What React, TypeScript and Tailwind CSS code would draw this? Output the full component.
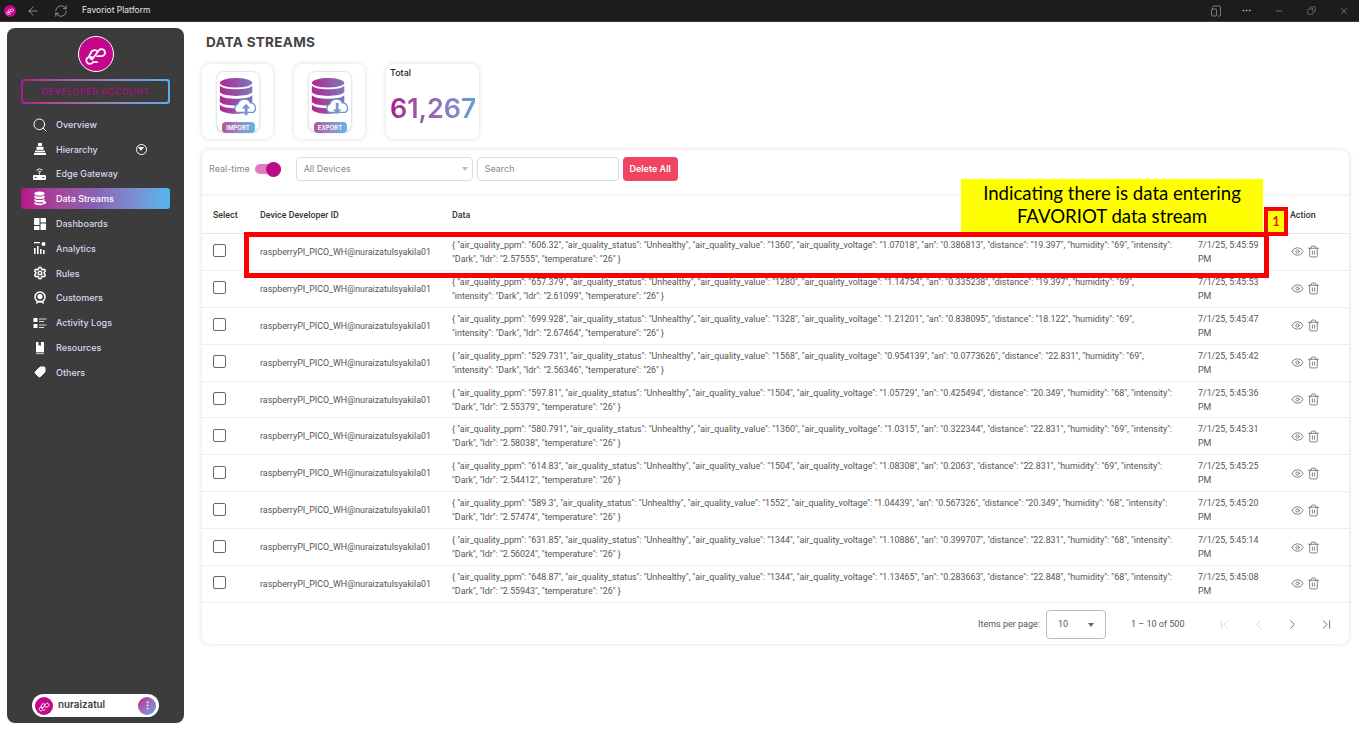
import React from 'react';
import { ArrowLeft, RefreshCw, Search, Settings, Eye, Trash2, ChevronLeft, ChevronRight, ChevronFirst, ChevronLast, Tag, MoreHorizontal, Minus, Copy, X, MoreVertical, TabletSmartphone } from 'lucide-react';

const rows = [
  ['{ "air_quality_ppm": "606.32", "air_quality_status": "Unhealthy", "air_quality_value": "1360", "air_quality_voltage": "1.07018", "an": "0.386813", "distance": "19.397", "humidity": "69", "intensity":', '"Dark", "ldr": "2.57555", "temperature": "26" }', '7/1/25, 5:45:59'],
  ['{ "air_quality_ppm": "657.379", "air_quality_status": "Unhealthy", "air_quality_value": "1280", "air_quality_voltage": "1.14754", "an": "0.335238", "distance": "19.397", "humidity": "69",', '"intensity": "Dark", "ldr": "2.61099", "temperature": "26" }', '7/1/25, 5:45:53'],
  ['{ "air_quality_ppm": "699.928", "air_quality_status": "Unhealthy", "air_quality_value": "1328", "air_quality_voltage": "1.21201", "an": "0.838095", "distance": "18.122", "humidity": "69",', '"intensity": "Dark", "ldr": "2.67464", "temperature": "26" }', '7/1/25, 5:45:47'],
  ['{ "air_quality_ppm": "529.731", "air_quality_status": "Unhealthy", "air_quality_value": "1568", "air_quality_voltage": "0.954139", "an": "0.0773626", "distance": "22.831", "humidity": "69",', '"intensity": "Dark", "ldr": "2.56346", "temperature": "26" }', '7/1/25, 5:45:42'],
  ['{ "air_quality_ppm": "597.81", "air_quality_status": "Unhealthy", "air_quality_value": "1504", "air_quality_voltage": "1.05729", "an": "0.425494", "distance": "20.349", "humidity": "68", "intensity":', '"Dark", "ldr": "2.55379", "temperature": "26" }', '7/1/25, 5:45:36'],
  ['{ "air_quality_ppm": "580.791", "air_quality_status": "Unhealthy", "air_quality_value": "1360", "air_quality_voltage": "1.0315", "an": "0.322344", "distance": "22.831", "humidity": "69", "intensity":', '"Dark", "ldr": "2.58038", "temperature": "26" }', '7/1/25, 5:45:31'],
  ['{ "air_quality_ppm": "614.83", "air_quality_status": "Unhealthy", "air_quality_value": "1504", "air_quality_voltage": "1.08308", "an": "0.2063", "distance": "22.831", "humidity": "69", "intensity":', '"Dark", "ldr": "2.54412", "temperature": "26" }', '7/1/25, 5:45:25'],
  ['{ "air_quality_ppm": "589.3", "air_quality_status": "Unhealthy", "air_quality_value": "1552", "air_quality_voltage": "1.04439", "an": "0.567326", "distance": "20.349", "humidity": "68", "intensity":', '"Dark", "ldr": "2.57474", "temperature": "26" }', '7/1/25, 5:45:20'],
  ['{ "air_quality_ppm": "631.85", "air_quality_status": "Unhealthy", "air_quality_value": "1344", "air_quality_voltage": "1.10886", "an": "0.399707", "distance": "22.831", "humidity": "68", "intensity":', '"Dark", "ldr": "2.56024", "temperature": "26" }', '7/1/25, 5:45:14'],
  ['{ "air_quality_ppm": "648.87", "air_quality_status": "Unhealthy", "air_quality_value": "1344", "air_quality_voltage": "1.13465", "an": "0.283663", "distance": "22.848", "humidity": "68", "intensity":', '"Dark", "ldr": "2.55943", "temperature": "26" }', '7/1/25, 5:45:08'],
];

const LogoGlyph: React.FC<{ size: number }> = ({ size }) => (
  <svg width={size} height={size} viewBox="0 0 32 32" fill="none" stroke="white" strokeWidth="2.2" strokeLinecap="round">
    <path d="M12 22 L20 11 a4.2 4.2 0 1 1 3.5 7 L18 18" />
    <path d="M18 12 a4.5 4.5 0 0 0 -7 1 L8 19 a4.2 4.2 0 1 0 5 6 h5" />
    <circle cx="11" cy="20" r="1.2" fill="white" />
  </svg>
);

const HierarchyIcon = () => (
  <svg width="14" height="14" viewBox="0 0 14 14" fill="white">
    <rect x="5" y="1" width="4" height="3" />
    <rect x="3.5" y="4.8" width="7" height="3" />
    <rect x="2" y="8.6" width="10" height="1.8" />
    <rect x="1" y="11" width="12" height="2" />
  </svg>
);

const GatewayIcon = () => (
  <svg width="15" height="14" viewBox="0 0 15 14" fill="none">
    <path d="M4.5 3.2 a4.5 4.5 0 0 1 6 0 M6 5 a2.4 2.4 0 0 1 3 0" stroke="white" strokeWidth="1" />
    <rect x="7" y="5.6" width="1" height="2" fill="white" />
    <rect x="1" y="8" width="13" height="5" rx="1.2" fill="white" />
    <rect x="2.6" y="10" width="2" height="1" fill="#3c3c3c" />
    <rect x="10.4" y="10" width="2" height="1" fill="#3c3c3c" />
  </svg>
);

const DbIcon = () => (
  <svg width="14" height="15" viewBox="0 0 14 15" fill="white">
    <ellipse cx="6.5" cy="2.6" rx="5" ry="2" />
    <path d="M1.5 4 c1 2 9 2 10 0 v2.4 c-1 2 -9 2 -10 0 z" />
    <path d="M1.5 7.4 c1 2 9 2 10 0 v2.4 c-1 2 -9 2 -10 0 z" />
    <path d="M1.5 10.8 c1 2 7 2 8 1.4 l1 1.2 c-2 1.2 -8 1 -9 -0.6 z" />
    <circle cx="11.5" cy="11.5" r="1.6" />
  </svg>
);

const DashIcon = () => (
  <svg width="14" height="14" viewBox="0 0 14 14" fill="white">
    <rect x="1" y="1" width="5.5" height="7" rx="0.6" />
    <rect x="7.5" y="1" width="5.5" height="4.5" rx="0.6" />
    <rect x="1" y="9" width="5.5" height="4" rx="0.6" />
    <rect x="7.5" y="6.5" width="5.5" height="6.5" rx="0.6" />
  </svg>
);

const AnalyticsIcon = () => (
  <svg width="14" height="14" viewBox="0 0 14 14" fill="white">
    <rect x="1" y="1" width="6" height="1.3" />
    <circle cx="10.5" cy="3" r="2" />
    <rect x="1" y="7" width="1.6" height="6" />
    <rect x="4" y="5" width="1.6" height="8" />
    <rect x="7" y="8" width="1.6" height="5" />
    <rect x="10" y="9" width="1.6" height="4" />
  </svg>
);

const CustomerIcon = () => (
  <svg width="14" height="14" viewBox="0 0 14 14" fill="none" stroke="white" strokeWidth="1.5">
    <circle cx="7" cy="6" r="5" />
    <circle cx="7" cy="5.5" r="1.8" fill="white" />
    <path d="M3.5 12.5 C4.5 9.5 9.5 9.5 10.5 12.5" />
  </svg>
);

const LogsIcon = () => (
  <svg width="14" height="14" viewBox="0 0 14 14" fill="white">
    <rect x="0.5" y="2" width="4" height="4" />
    <rect x="0.5" y="8" width="4" height="4" />
    <rect x="6" y="2.5" width="7.5" height="1" opacity="0.8" />
    <rect x="6" y="5" width="5" height="1" opacity="0.8" />
    <rect x="6" y="8.5" width="7.5" height="1" opacity="0.8" />
    <rect x="6" y="11" width="5" height="1" opacity="0.8" />
  </svg>
);

const BookIcon = () => (
  <svg width="12" height="14" viewBox="0 0 12 14" fill="white">
    <path d="M2 1 h2.5 v4 l1.2 -1 l1.2 1 v-4 h3.1 v10 h-8 z" />
    <rect x="2" y="11.6" width="8" height="1.6" fill="#bbb" />
  </svg>
);

const DbArt: React.FC<{ id: string; label: string; up: boolean }> = ({ id, label, up }) => (
  <div className="relative w-[44px] h-[61px] rounded-lg border border-gray-200 bg-white shadow-sm flex justify-center">
    <svg width="44" height="56" viewBox="0 0 44 56">
      <defs>
        <linearGradient id={id} x1="0" x2="1" y1="0" y2="0">
          <stop offset="0" stopColor="#b0278f" />
          <stop offset="1" stopColor="#7d78bd" />
        </linearGradient>
      </defs>
      <ellipse cx="20" cy="10" rx="17" ry="5" fill={`url(#${id})`} />
      <path d="M3 13 c4 5 30 5 34 0 v7 c-4 5 -30 5 -34 0 z" fill={`url(#${id})`} />
      <path d="M3 23 c4 5 30 5 34 0 v7 c-4 5 -30 5 -34 0 z" fill={`url(#${id})`} />
      <path d="M3 33 c4 5 30 5 34 0 v5 c-4 6 -30 6 -34 0 z" fill={`url(#${id})`} />
      <path d="M21 41 a5 5 0 0 1 1 -9 a7 7 0 0 1 13 -1 a5.5 5.5 0 0 1 3 10 z" fill="white" stroke="#6f8fcb" strokeWidth="1.3" />
      {up ? (
        <path d="M29 44 v-7 h-3 l4.5 -5 l4.5 5 h-3 v7 z" fill="#7d93cf" />
      ) : (
        <path d="M28 31 v7 h-3 l4.5 5 l4.5 -5 h-3 v-7 z" fill="#7d93cf" />
      )}
    </svg>
    <div className="absolute left-[5px] bottom-[-2px] w-[33px] h-[11px] rounded-sm bg-gradient-to-r from-[#b0569f] to-[#55b6ea] text-white text-[6px] font-semibold flex items-center justify-center font-['Inter',sans-serif]">
      {label}
    </div>
  </div>
);

const navItems: { label: string; icon: React.ReactNode; active?: boolean; arrow?: boolean }[] = [
  { label: 'Overview', icon: <Search size={16} strokeWidth={1.5} /> },
  { label: 'Hierarchy', icon: <HierarchyIcon />, arrow: true },
  { label: 'Edge Gateway', icon: <GatewayIcon /> },
  { label: 'Data Streams', icon: <DbIcon />, active: true },
  { label: 'Dashboards', icon: <DashIcon /> },
  { label: 'Analytics', icon: <AnalyticsIcon /> },
  { label: 'Rules', icon: <Settings size={14} strokeWidth={2.6} /> },
  { label: 'Customers', icon: <CustomerIcon /> },
  { label: 'Activity Logs', icon: <LogsIcon /> },
  { label: 'Resources', icon: <BookIcon /> },
  { label: 'Others', icon: <Tag size={12} fill="white" className="rotate-90" /> },
];

const App: React.FC = () => {
  return (
    <div className="relative w-full h-[731px] overflow-hidden bg-white font-['Roboto',sans-serif]">
      {/* title bar */}
      <div className="h-[22px] bg-[#1c1c1c] border-b border-[#3a3a3a] flex items-center text-white">
        <div className="ml-[4px] w-[12px] h-[12px] rounded-full bg-[#c4068a] flex items-center justify-center">
          <LogoGlyph size={10} />
        </div>
        <ArrowLeft size={14} strokeWidth={1} className="ml-[10px] text-gray-300" />
        <RefreshCw size={14} strokeWidth={1} className="ml-[14px] text-gray-300" />
        <span className="ml-[14px] text-[8.5px] font-['Inter',sans-serif] text-gray-200">Favoriot Platform</span>
        <div className="ml-auto flex items-center text-gray-300">
          <TabletSmartphone size={12} strokeWidth={1} className="mr-[19px]" />
          <MoreHorizontal size={11} strokeWidth={1.5} className="mr-[22px]" />
          <Minus size={10} strokeWidth={1} className="mr-[23px]" />
          <Copy size={9} strokeWidth={1} className="mr-[23px] scale-x-[-1]" />
          <X size={10} strokeWidth={1} className="mr-[10px]" />
        </div>
      </div>

      <div className="flex">
        {/* sidebar */}
        <aside className="ml-[7px] mt-[6px] w-[177px] h-[695px] rounded-lg bg-[#3c3c3c] flex flex-col font-['Inter',sans-serif]">
          <div className="pt-[8px] h-[82px] border-b border-[#363636] flex flex-col items-center">
            <div className="w-[36px] h-[36px] rounded-full bg-[#c4068a] border border-white flex items-center justify-center">
              <LogoGlyph size={27} />
            </div>
            <div className="mt-[7px] w-[149px] h-[25px] rounded-[3px] p-[2px] bg-gradient-to-r from-[#b5128a] to-[#4fb3ea] self-start ml-[14px]">
              <div className="w-full h-full rounded-[2px] bg-[#3c3c3c] flex items-center justify-center text-[9px] tracking-[0.45px] font-medium text-[#a5127f]">
                DEVELOPER ACCOUNT
              </div>
            </div>
          </div>
          <nav className="mt-[4px] ml-[14px] w-[149px] flex flex-col">
            {navItems.map(item => (
              <div
                key={item.label}
                className={`h-[21px] mb-[3.8px] rounded-[3px] flex items-center text-[9px] font-medium ${item.active ? 'bg-gradient-to-r from-[#b5128a] via-[#8a62b3] to-[#4fb7ec] text-white' : 'text-[#d8d8ee]'}`}
              >
                <span className="w-[35px] flex justify-center pl-[2px] text-white">{item.icon}</span>
                <span>{item.label}</span>
                {item.arrow && (
                  <span className="ml-[38px] w-[11px] h-[11px] rounded-full border border-white flex items-center justify-center">
                    <span className="border-x-[3px] border-x-transparent border-t-[4px] border-t-white" />
                  </span>
                )}
              </div>
            ))}
          </nav>
          <div className="mt-auto mb-[6px] ml-[25px] w-[127px] h-[23px] rounded-full bg-white flex items-center px-[3px]">
            <div className="w-[18px] h-[18px] rounded-full bg-[#c4068a] flex items-center justify-center">
              <LogoGlyph size={14} />
            </div>
            <span className="ml-[5px] text-[9.8px] font-semibold text-[#3c3c3c]">nuraizatul</span>
            <div className="ml-auto w-[18px] h-[18px] rounded-full bg-gradient-to-br from-[#b5128a] to-[#4fa5e6] flex items-center justify-center">
              <MoreVertical size={11} className="text-white" />
            </div>
          </div>
        </aside>

        {/* main */}
        <main className="ml-[18px] w-[1147px]">
          <h1 className="ml-[4px] mt-[12px] h-[17px] leading-[17px] text-[13.5px] font-bold tracking-[0.3px] text-[#444] font-['Inter',sans-serif]">DATA STREAMS</h1>
          <div className="mt-[13px] flex gap-[21px]">
            <div className="w-[71px] h-[75px] rounded-lg bg-white shadow-[0_0_5px_rgba(0,0,0,0.14)] flex items-center justify-center">
              <DbArt id="imp" label="IMPORT" up />
            </div>
            <div className="w-[71px] h-[75px] rounded-lg bg-white shadow-[0_0_5px_rgba(0,0,0,0.14)] flex items-center justify-center">
              <DbArt id="exp" label="EXPORT" up={false} />
            </div>
            <div className="w-[93px] h-[75px] rounded-lg bg-white shadow-[0_0_5px_rgba(0,0,0,0.14)] px-[4px] pt-[3px] font-['Inter',sans-serif]">
              <div className="text-[9px] leading-[12px] font-medium text-[#222]">Total</div>
              <div className="mt-[13px] text-[27px] leading-[34px] tracking-[-0.1px] font-semibold whitespace-nowrap bg-gradient-to-r from-[#a8188c] to-[#5f9fdc] bg-clip-text text-transparent">61,267</div>
            </div>
          </div>

          <section className="mt-[11px] h-[494px] rounded-lg bg-white shadow-[0_0_5px_rgba(0,0,0,0.14)] flex flex-col">
            <div className="h-[44px] flex items-center shadow-[0_1px_2px_rgba(0,0,0,0.08)] pl-[7px] pb-[6px] text-[9px] font-['Inter',sans-serif]">
              <span className="text-[#888]">Real-time</span>
              <div className="relative ml-[5px] w-[26px] h-[10px] rounded-full bg-[#e07cc0]">
                <div className="absolute right-0 top-[-2.5px] w-[15px] h-[15px] rounded-full bg-[#b80b85]" />
              </div>
              <div className="ml-[15px] w-[177px] h-[24px] rounded border border-[#ddd] flex items-center pl-[7px] pr-[4px] text-[#888]">
                All Devices
                <span className="ml-auto border-x-[3.5px] border-x-transparent border-t-[4px] border-t-[#bbb]" />
              </div>
              <div className="ml-[4px] w-[142px] h-[24px] rounded border border-[#ddd] flex items-center pl-[7px] text-[#888]">Search</div>
              <div className="ml-[4px] w-[55px] h-[24px] rounded bg-[#ef4560] text-white font-semibold flex items-center justify-center">Delete All</div>
            </div>

            <div className="h-[40px] flex items-center text-[8.85px] font-medium text-[#333] border-b border-[#e8e8e8] pl-[11px] pt-[4px]">
              <span className="w-[47px]">Select</span>
              <span className="w-[192px]">Device Developer ID</span>
              <span className="w-[838px]">Data</span>
              <span>Action</span>
            </div>

            {rows.map((row, i) => (
              <div key={i} className="h-[36.9px] flex items-center text-[8.87px] leading-[14px] text-[#555] border-b border-[#eee] pl-[11px]">
                <span className="w-[47px] -mt-[2px]">
                  <span className="block w-[13px] h-[13px] rounded-[2px] border-[1.5px] border-[#666]" />
                </span>
                <span className="w-[192px] whitespace-nowrap">raspberryPI_PICO_WH@nuraizatulsyakila01</span>
                <div className="w-[746px] whitespace-nowrap">
                  <div>{row[0]}</div>
                  <div>{row[1]}</div>
                </div>
                <div className="w-[92px] whitespace-nowrap">
                  <div>{row[2]}</div>
                  <div>PM</div>
                </div>
                <div className="ml-[1px] flex items-center gap-[3px] text-[#666]">
                  <Eye size={13} strokeWidth={1.5} />
                  <Trash2 size={13} strokeWidth={1.5} />
                </div>
              </div>
            ))}

            <div className="flex-1 flex items-center text-[9px] text-[#555] pl-[776px] pt-[3px]">
              <span>Items per page:</span>
              <div className="ml-[6px] w-[60px] h-[29px] rounded border border-[#bbb] flex items-center pl-[11px] pr-[11px]">
                10
                <span className="ml-auto border-x-[3.5px] border-x-transparent border-t-[4px] border-t-[#666]" />
              </div>
              <span className="ml-[25px]">1 – 10 of 500</span>
              <div className="ml-[33px] flex items-center gap-[19px]">
                <ChevronFirst size={15} strokeWidth={1.3} className="text-[#ccc]" />
                <ChevronLeft size={15} strokeWidth={1.3} className="text-[#ccc]" />
                <ChevronRight size={15} strokeWidth={1.3} className="text-[#555]" />
                <ChevronLast size={15} strokeWidth={1.3} className="text-[#555]" />
              </div>
            </div>
          </section>
        </main>
      </div>

      {/* annotation */}
      <div className="absolute left-[244px] top-[232px] w-[1025px] h-[46px] border-[5px] border-[#ff0000]" />
      <div className="absolute left-[961px] top-[179px] w-[302px] h-[53px] bg-[#ffff00] flex flex-col items-center justify-center pb-[2px] text-[18.6px] leading-[23px] text-black font-['Lato',sans-serif]">
        <span>Indicating there is data entering</span>
        <span>FAVORIOT data stream</span>
      </div>
      <div className="absolute left-[1264px] top-[207px] w-[24px] h-[29px] border-[4px] border-[#ff0000] bg-[#ffff00] flex items-center justify-center text-[13px] font-bold text-[#e02020] font-['Lato',sans-serif]">1</div>
    </div>
  );
};

export default App;
